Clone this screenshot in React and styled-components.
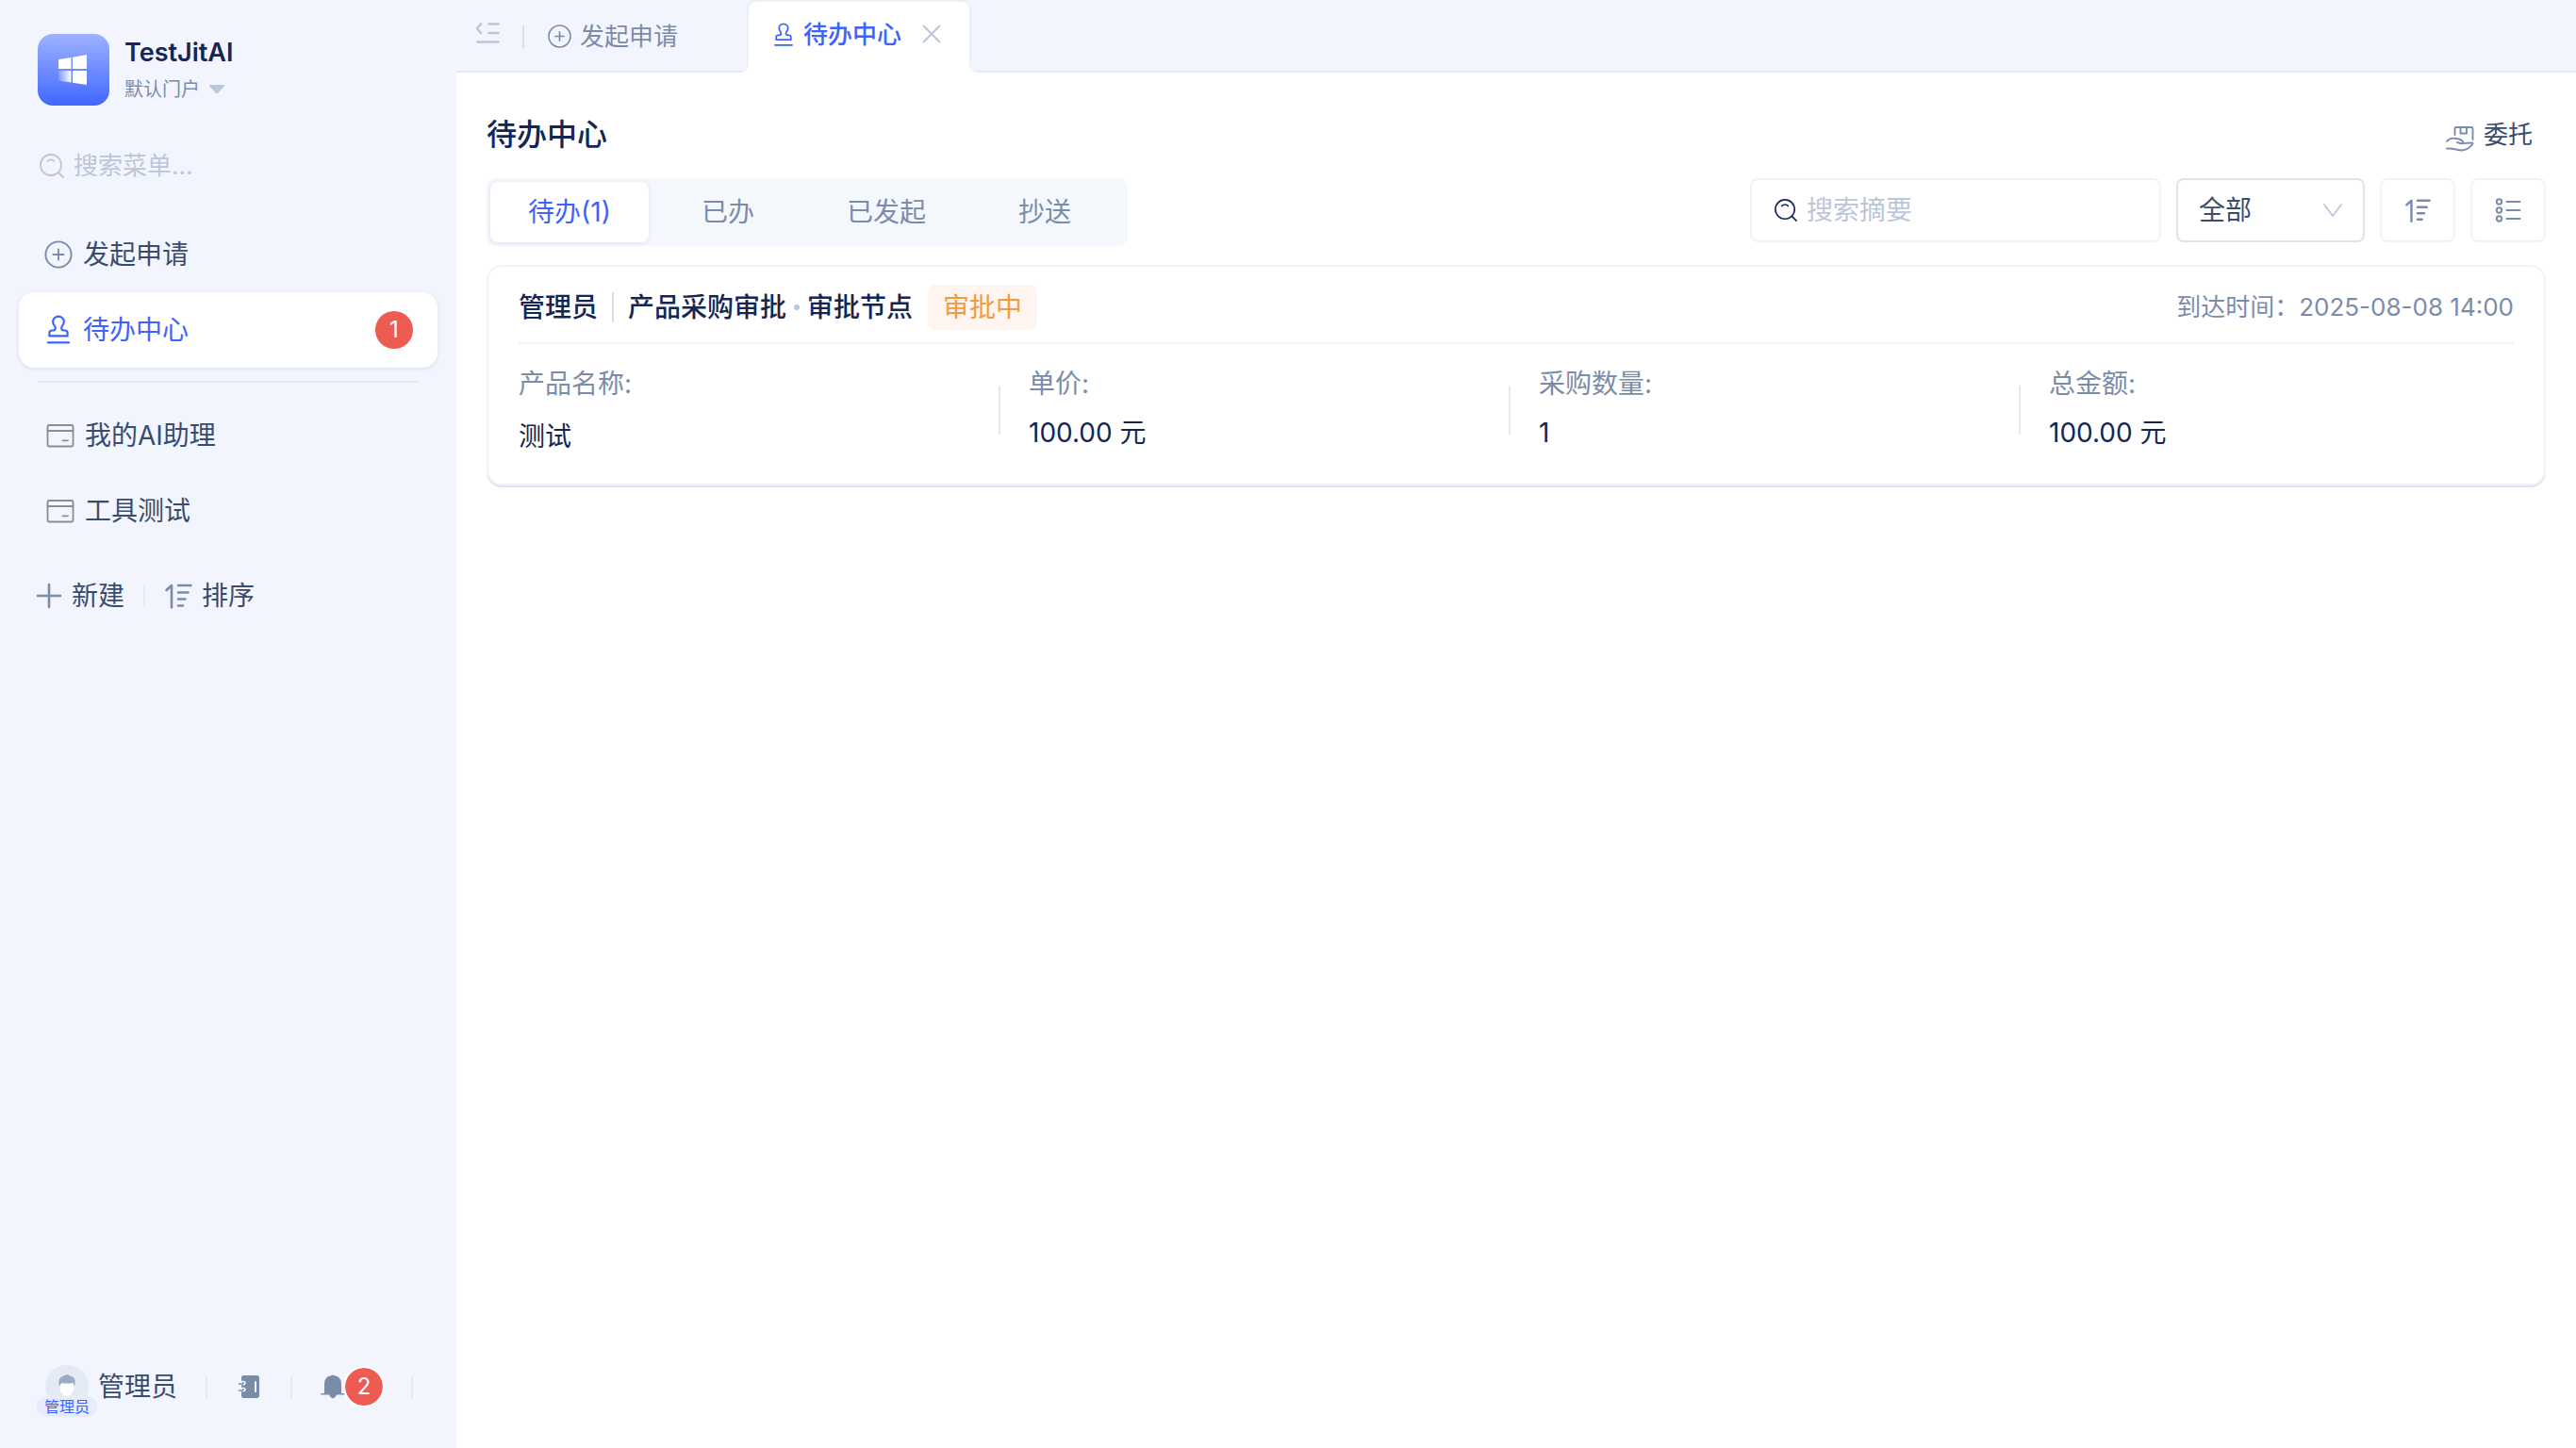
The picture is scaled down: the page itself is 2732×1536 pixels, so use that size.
import React from "react";
import styled, { createGlobalStyle } from "styled-components";

const Global = createGlobalStyle`
  *, *::before, *::after { box-sizing: border-box; }
  html, body { margin: 0; padding: 0; }
  body { font-family: Inter, "Noto Sans CJK SC", sans-serif; font-size: 28px; line-height: 40px; color: #3a4c6e; background: #fff; }
  button, input, select { font: inherit; color: inherit; margin: 0; padding: 0; border: 0; background: none; }
  button { cursor: pointer; }
  a { color: inherit; text-decoration: none; }
  h1, h2, p, ul, dl, dd, dt { margin: 0; padding: 0; }
  ul { list-style: none; }
  svg { display: block; flex: none; }
`;

const Shell = styled.div`
  display: grid;
  grid-template-columns: 484px minmax(0, 1fr);
  min-height: 100vh;
`;

const Sidebar = styled.aside`
  display: flex;
  flex-direction: column;
  padding: 36px 20px;
  background: #f2f5fd;
`;

const Brand = styled.header`
  display: flex;
  align-items: flex-start;
  gap: 16px;
  padding: 0 20px;
`;

const BrandText = styled.div`
  display: flex;
  flex-direction: column;
`;

const BrandName = styled.strong`
  font-size: 27px;
  line-height: 40px;
  font-weight: 600;
  color: #152654;
`;

const PortalButton = styled.button`
  display: flex;
  align-items: center;
  gap: 10px;
  font-size: 20px;
  line-height: 38px;
  color: #7b8caa;
`;

const MenuSearch = styled.label`
  display: flex;
  align-items: center;
  gap: 10px;
  height: 48px;
  margin-top: 38px;
  padding: 0 22px;
  color: #bcc6da;
`;

const SearchInput = styled.input`
  flex: 1;
  min-width: 0;
  font-size: ${(p) => (p.$small ? "26px" : "28px")};
  outline: none;
  color: #152654;
  &::placeholder { color: #bcc6da; opacity: 1; }
`;

const MenuList = styled.ul`
  display: flex;
  flex-direction: column;
`;

const TopMenu = styled(MenuList)`
  margin-top: 30px;
`;

const MenuLink = styled.a`
  display: flex;
  align-items: center;
  gap: 10px;
  height: 80px;
  padding: 0 26px;
  border-radius: 16px;
  color: ${(p) => (p.$active ? "#3d63ff" : "#3a4c6e")};
  background: ${(p) => (p.$active ? "#fff" : "transparent")};
  box-shadow: ${(p) => (p.$active ? "0 1px 4px rgba(40, 70, 130, 0.14)" : "none")};
  svg { color: ${(p) => (p.$active ? "#3d63ff" : "#7b8caa")}; }
`;

const CountBadge = styled.span`
  display: flex;
  align-items: center;
  justify-content: center;
  width: 40px;
  height: 40px;
  border-radius: 50%;
  font-size: 24px;
  color: #fff;
  background: #ee5b53;
`;

const MenuBadge = styled(CountBadge)`
  margin-left: auto;
`;

const MenuRule = styled.hr`
  align-self: stretch;
  height: 2px;
  margin: 14px 20px 16px;
  border: 0;
  background: #e4e9f3;
`;

const MenuActions = styled.div`
  display: flex;
  align-items: center;
  gap: 20px;
  margin-top: 30px;
  padding: 0 18px;
`;

const TextButton = styled.button`
  display: flex;
  align-items: center;
  gap: 10px;
  font-size: ${(p) => p.$size || 28}px;
  color: #3a4c6e;
  svg { color: #7b8caa; }
`;

const Divider = styled.span`
  flex: none;
  width: 2px;
  height: ${(p) => p.$height || 24}px;
  background: ${(p) => (p.$strong ? "#d8dfeb" : "#e4e9f3")};
`;

const UserBar = styled.footer`
  display: flex;
  align-items: center;
  height: 58px;
  margin-top: auto;
  padding: 0 18px;
`;

const Avatar = styled.span`
  position: relative;
  width: 46px;
  height: 46px;
  margin-left: 10px;
`;

const AvatarTag = styled.span`
  position: absolute;
  left: -9px;
  top: 33px;
  width: 64px;
  border-radius: 11px;
  font-size: 16px;
  line-height: 22px;
  text-align: center;
  color: #3d63ff;
  background: #e6ebff;
`;

const UserName = styled.span`
  margin: 0 30px 0 10px;
`;

const IconButton = styled.button`
  display: flex;
  align-items: center;
  color: ${(p) => (p.$faint ? "#bcc6da" : "#7b8caa")};
`;

const BookButton = styled(IconButton)`
  margin: 0 32px;
`;

const BellButton = styled(IconButton)`
  margin: 0 30px;
`;

const BellBadge = styled(CountBadge)`
  outline: 2px solid #fff;
`;

const Main = styled.main`
  display: flex;
  flex-direction: column;
  min-width: 0;
`;

const TabBar = styled.nav`
  display: flex;
  align-items: center;
  height: 77px;
  padding-left: 20px;
  background: #f2f5fd;
  box-shadow: inset 0 -2px #e4e9f3;
`;

const FoldButton = styled(IconButton)`
  margin: 0 24px 8px 0;
`;

const Tab = styled.a`
  display: flex;
  align-items: center;
  gap: 8px;
  height: 72px;
  padding: 0 24px;
  font-size: 26px;
  color: #7b8caa;
`;

const PlainTab = styled(Tab)`
  width: 236px;
`;

const ActiveTab = styled.div`
  position: relative;
  display: flex;
  align-items: flex-start;
  gap: 22px;
  height: 77px;
  padding-right: 30px;
  border: 2px solid #eceff6;
  border-bottom: 0;
  border-radius: 10px 10px 0 0;
  background: #fff;
  ${Tab} { height: 70px; padding: 0 0 0 24px; font-weight: 500; color: #3d63ff; }
  &::before, &::after {
    content: "";
    position: absolute;
    bottom: 0;
    width: 8px;
    height: 8px;
  }
  &::before { right: 100%; background: radial-gradient(circle at 0 0, transparent 7px, #fff 8px); }
  &::after { left: 100%; background: radial-gradient(circle at 100% 0, transparent 7px, #fff 8px); }
`;

const CloseButton = styled(IconButton)`
  height: 68px;
`;

const Content = styled.section`
  display: flex;
  flex-direction: column;
  padding: 46px 32px;
`;

const TitleRow = styled.div`
  display: flex;
  align-items: center;
  justify-content: space-between;
  height: 40px;
  padding-right: 14px;
`;

const Title = styled.h1`
  font-size: 32px;
  line-height: 40px;
  font-weight: 500;
  color: #152654;
`;

const Toolbar = styled.div`
  display: flex;
  align-items: flex-start;
  gap: 16px;
  margin-top: 26px;
`;

const Segments = styled.div`
  display: flex;
  height: 72px;
  margin-right: auto;
  padding: 4px;
  border-radius: 10px;
  background: #f4f7fc;
`;

const Segment = styled.button`
  width: 168px;
  border-radius: 8px;
  color: ${(p) => (p.$active ? "#3d63ff" : "#7b8caa")};
  background: ${(p) => (p.$active ? "#fff" : "transparent")};
  box-shadow: ${(p) => (p.$active ? "0 1px 5px rgba(40, 70, 130, 0.12)" : "none")};
`;

const SearchBox = styled.label`
  display: flex;
  align-items: center;
  gap: 10px;
  width: 436px;
  height: 68px;
  padding: 0 24px;
  border: 2px solid #eff2f8;
  border-radius: 8px;
  color: #152654;
`;

const SelectBox = styled.div`
  display: grid;
  align-items: center;
  width: 200px;
  height: 68px;
  border: 2px solid #dde3ed;
  border-radius: 8px;
  > * { grid-area: 1 / 1; }
  svg { justify-self: end; margin-right: 22px; color: #bcc6da; pointer-events: none; }
`;

const Select = styled.select`
  appearance: none;
  height: 64px;
  padding: 0 22px;
  color: #3a4c6e;
  outline: none;
`;

const SquareButton = styled.button`
  display: flex;
  align-items: center;
  justify-content: center;
  width: 80px;
  height: 68px;
  border: 2px solid #eff2f8;
  border-radius: 8px;
  color: #7b8caa;
`;

const Card = styled.article`
  margin-top: 20px;
  padding: 0 32px 30px;
  border: 2px solid #eff2f8;
  border-radius: 16px;
  box-shadow: 0 2px #dfe4ee;
  background: #fff;
`;

const CardHead = styled.header`
  display: flex;
  align-items: center;
  height: 82px;
  padding-top: 6px;
  border-bottom: 2px solid #eff3f8;
  color: #152654;
`;

const CardTitle = styled.h2`
  display: flex;
  align-items: center;
  font-size: 28px;
  line-height: 40px;
  font-weight: 500;
`;

const CardDivider = styled(Divider)`
  margin: 0 15px;
`;

const Dot = styled.span`
  width: 6px;
  height: 6px;
  margin: 0 8px;
  border-radius: 50%;
  background: #bcc6da;
`;

const Status = styled.span`
  margin-left: 16px;
  padding: 4px 16px;
  border-radius: 8px;
  color: #f29a3f;
  background: #fef5f0;
`;

const Arrived = styled.time`
  margin-left: auto;
  font-size: 26px;
  color: #7b8caa;
`;

const Fields = styled.dl`
  display: grid;
  grid-template-columns: repeat(4, minmax(0, 1fr));
  gap: 30px;
  margin: 22px -18px 0 0;
`;

const Field = styled.div`
  display: flex;
  justify-content: space-between;
`;

const FieldDivider = styled(Divider)`
  align-self: center;
`;

const Label = styled.dt`
  color: #7b8caa;
`;

const Value = styled.dd`
  margin-top: ${(p) => (p.$numeric ? 12 : 16)}px;
  color: #152654;
`;

const line = { fill: "none", stroke: "currentColor", strokeLinecap: "round", strokeLinejoin: "round" };

const Logo = () => (
  <svg width="76" height="76" viewBox="0 0 76 76" aria-hidden="true">
    <defs>
      <linearGradient id="tile" x1="0" y1="0" x2="0" y2="1">
        <stop offset="0" stopColor="#9eb2ff" />
        <stop offset="1" stopColor="#4067ff" />
      </linearGradient>
      <linearGradient id="pane" x1="0" y1="0" x2="1" y2="0">
        <stop offset="0" stopColor="#fff" stopOpacity="0.15" />
        <stop offset="1" stopColor="#fff" />
      </linearGradient>
    </defs>
    <rect width="76" height="76" rx="16" fill="url(#tile)" />
    <path d="M22 27l13.500-2v12H22zM37 24.800L52 22v15H37zM37 39h15v15l-15-2.300z" fill="#fff" />
    <path d="M22 39h13.500v12.500L22 49.500z" fill="url(#pane)" />
  </svg>
);

const SearchIcon = ({ size = 26 }) => (
  <svg width={size} height={size} viewBox="0 0 26 26" strokeWidth="1.800" {...line} aria-hidden="true">
    <circle cx="12" cy="12" r="11" />
    <path d="M8.500 8c1.800-2 5.200-2 7 0M20 20l5 5" />
  </svg>
);

const PlusCircle = ({ size = 32 }) => (
  <svg width={size} height={size} viewBox="0 0 32 32" strokeWidth="1.900" {...line} aria-hidden="true">
    <circle cx="16" cy="16" r="13.600" />
    <path d="M16 10.500v11M10.500 16h11" />
  </svg>
);

const StampIcon = ({ size = 32 }) => (
  <svg width={size} height={size} viewBox="0 0 30 30" strokeWidth="2" {...line} aria-hidden="true">
    <path d="M4.500 27.500h21M6 21v-3c0-1.500 1-2.500 2.500-2.500h1.500c1.500 0 2-1 2-2.500 0-2-2.500-3-2.500-6.200C9.500 3.800 12 1.500 15 1.500s5.500 2.300 5.500 5.300c0 3.200-2.500 4.200-2.500 6.200 0 1.500.5 2.500 2 2.500h1.500c1.500 0 2.500 1 2.500 2.500v3z" />
  </svg>
);

const PageIcon = () => (
  <svg width="34" height="28" viewBox="0 0 34 28" {...line} stroke="#8d8d8d" strokeWidth="1.800" aria-hidden="true">
    <rect x="4.500" y="3" width="27" height="22.500" rx="1.500" />
    <path d="M4.500 9h27M20.500 19.300h5.500" />
  </svg>
);

const PlusIcon = () => (
  <svg width="28" height="28" viewBox="0 0 28 28" strokeWidth="2.600" {...line} aria-hidden="true">
    <path d="M14 2v24M2 14h24" />
  </svg>
);

const SortIcon = ({ size = 30 }) => (
  <svg width={size} height={size} viewBox="0 0 30 30" strokeWidth="2.600" {...line} aria-hidden="true">
    <path d="M2.500 9l5.500-5v23.500M15 4H28.500M15 11.500H25.500M15 18.500H22.500M15 25.500H20" />
  </svg>
);

const ListIcon = () => (
  <svg width="28" height="26" viewBox="0 0 28 26" strokeWidth="2" {...line} aria-hidden="true">
    <circle cx="4.500" cy="4" r="2.700" />
    <circle cx="4.500" cy="13" r="2.700" />
    <circle cx="4.500" cy="22" r="2.700" />
    <path d="M12.500 4h14M12.500 13h14M12.500 22h14" />
  </svg>
);

const FoldIcon = () => (
  <svg width="26" height="24" viewBox="0 0 26 24" strokeWidth="2.600" {...line} aria-hidden="true">
    <path d="M6 2.500L2 7l4 5M14.500 2.500h10M14.500 12h10M2.500 21.500h22" />
  </svg>
);

const CloseIcon = () => (
  <svg width="20" height="20" viewBox="0 0 20 20" strokeWidth="2" {...line} aria-hidden="true">
    <path d="M1.500 1.500l17 17M18.500 1.500l-17 17" />
  </svg>
);

const ChevronDown = () => (
  <svg width="20" height="14" viewBox="0 0 20 14" strokeWidth="1.800" {...line} aria-hidden="true">
    <path d="M1 1l9 12 9-12" />
  </svg>
);

const CaretDown = () => (
  <svg width="16" height="10" viewBox="0 0 16 10" fill="#bcc6da" aria-hidden="true">
    <path d="M1 0h14q2 0 .5 1.800L9.500 8.500q-1.500 1.500-3 0L.5 1.800Q-1 0 1 0z" />
  </svg>
);

const HandIcon = () => (
  <svg width="30" height="36" viewBox="0 -9 30 36" strokeWidth="1.900" {...line} aria-hidden="true">
    <path d="M9.500 9V2.500C9.500 1.500 10 1 11 1h16c1 0 1.500.5 1.500 1.500V14M15.500 1v6.500h6.500V1" />
    <path d="M1 16c2.500-3 5-3.800 8-3.200 4 .2 6.500 1 8.500 2.700 1.200 1.500.5 3-1 2.800-2 0-3-.8-4.500-1.300M16.500 18.300c4 0 7-1 11-.8.800 0 1.200.5.800 1.200-2.500 3.500-6.300 6.500-11.300 6.800C12.500 25.500 10 23.300 1 23.500" />
  </svg>
);

const BookIcon = () => (
  <svg width="24" height="26" viewBox="0 0 24 26" fill="currentColor" aria-hidden="true">
    <rect x="4" y="1" width="19" height="24" rx="2.500" />
    <path d="M19 8v10" stroke="#f2f5fd" strokeWidth="2" strokeLinecap="round" />
    <path d="M3.500 9h3M3.500 16h3" stroke="#f2f5fd" strokeWidth="4.500" strokeLinecap="round" />
    <path d="M1.500 10h3.500q1-.3 1-1.500M1.500 17h3.500q1-.3 1-1.500" fill="none" stroke="currentColor" strokeWidth="1.600" strokeLinecap="round" />
  </svg>
);

const BellIcon = () => (
  <svg width="26" height="26" viewBox="0 0 26 26" fill="currentColor" aria-hidden="true">
    <path d="M4 20V10q0-7 6-8.500 3-1.500 6 0 6 1.500 6 8.500v10h3q1 0 1 1.500H17q-1 3-4 4-3-1-4-4H0Q0 20 1 20z" />
  </svg>
);

const AvatarIcon = () => (
  <svg width="46" height="46" viewBox="0 0 46 46" aria-hidden="true">
    <circle cx="23" cy="23" r="23" fill="#e3eaf3" />
    <path d="M16 16h14.500v5q1.500 1 0 3c-1 5.500-3.500 9-7.500 9s-6.500-3.500-7.500-9q-1.500-2 .5-3z" fill="#fff" />
    <path d="M15 23c-1-6-1-9 3.500-11 3-2.500 7-2.500 8 0 5 .5 6 4 4.500 11l-1.500-4q-7 1-12.500 0z" fill="#9dabc3" />
  </svg>
);

const fields = [
  { label: "产品名称:", value: "测试" },
  { label: "单价:", value: "100.00 元", numeric: true },
  { label: "采购数量:", value: "1", numeric: true },
  { label: "总金额:", value: "100.00 元", numeric: true },
];

const segments = ["待办(1)", "已办", "已发起", "抄送"];

export default function App() {
  return (
    <>
      <Global />
      <Shell>
        <Sidebar>
          <Brand>
            <Logo />
            <BrandText>
              <BrandName>TestJitAI</BrandName>
              <PortalButton>默认门户<CaretDown /></PortalButton>
            </BrandText>
          </Brand>
          <MenuSearch>
            <SearchIcon />
            <SearchInput $small placeholder="搜索菜单..." aria-label="搜索菜单" />
          </MenuSearch>
          <TopMenu>
            <li><MenuLink href="#apply"><PlusCircle />发起申请</MenuLink></li>
            <li><MenuLink href="#todo" $active><StampIcon />待办中心<MenuBadge>1</MenuBadge></MenuLink></li>
          </TopMenu>
          <MenuRule />
          <MenuList>
            <li><MenuLink href="#assistant"><PageIcon />我的AI助理</MenuLink></li>
            <li><MenuLink href="#tools"><PageIcon />工具测试</MenuLink></li>
          </MenuList>
          <MenuActions>
            <TextButton><PlusIcon />新建</TextButton>
            <Divider />
            <TextButton><SortIcon />排序</TextButton>
          </MenuActions>
          <UserBar>
            <Avatar><AvatarIcon /><AvatarTag>管理员</AvatarTag></Avatar>
            <UserName>管理员</UserName>
            <Divider />
            <BookButton aria-label="通讯录"><BookIcon /></BookButton>
            <Divider />
            <BellButton aria-label="通知"><BellIcon /><BellBadge>2</BellBadge></BellButton>
            <Divider />
          </UserBar>
        </Sidebar>
        <Main>
          <TabBar>
            <FoldButton $faint aria-label="收起菜单"><FoldIcon /></FoldButton>
            <Divider $strong />
            <PlainTab href="#apply"><PlusCircle size={27} />发起申请</PlainTab>
            <ActiveTab>
              <Tab href="#todo"><StampIcon size={26} />待办中心</Tab>
              <CloseButton $faint aria-label="关闭"><CloseIcon /></CloseButton>
            </ActiveTab>
          </TabBar>
          <Content>
            <TitleRow>
              <Title>待办中心</Title>
              <TextButton $size={26}><HandIcon />委托</TextButton>
            </TitleRow>
            <Toolbar>
              <Segments>
                {segments.map((s, i) => <Segment key={s} $active={i === 0}>{s}</Segment>)}
              </Segments>
              <SearchBox>
                <SearchIcon size={24} />
                <SearchInput placeholder="搜索摘要" aria-label="搜索摘要" />
              </SearchBox>
              <SelectBox>
                <Select aria-label="流程类型"><option>全部</option></Select>
                <ChevronDown />
              </SelectBox>
              <SquareButton aria-label="排序"><SortIcon size={28} /></SquareButton>
              <SquareButton aria-label="列表"><ListIcon /></SquareButton>
            </Toolbar>
            <Card>
              <CardHead>
                <CardTitle>
                  管理员<CardDivider $height={32} $strong />产品采购审批<Dot />审批节点
                </CardTitle>
                <Status>审批中</Status>
                <Arrived>到达时间：2025-08-08 14:00</Arrived>
              </CardHead>
              <Fields>
                {fields.map(({ label, value, numeric }, i) => (
                  <Field key={label}>
                    <div>
                      <Label>{label}</Label>
                      <Value $numeric={numeric}>{value}</Value>
                    </div>
                    {i < fields.length - 1 && <FieldDivider $height={52} />}
                  </Field>
                ))}
              </Fields>
            </Card>
          </Content>
        </Main>
      </Shell>
    </>
  );
}
